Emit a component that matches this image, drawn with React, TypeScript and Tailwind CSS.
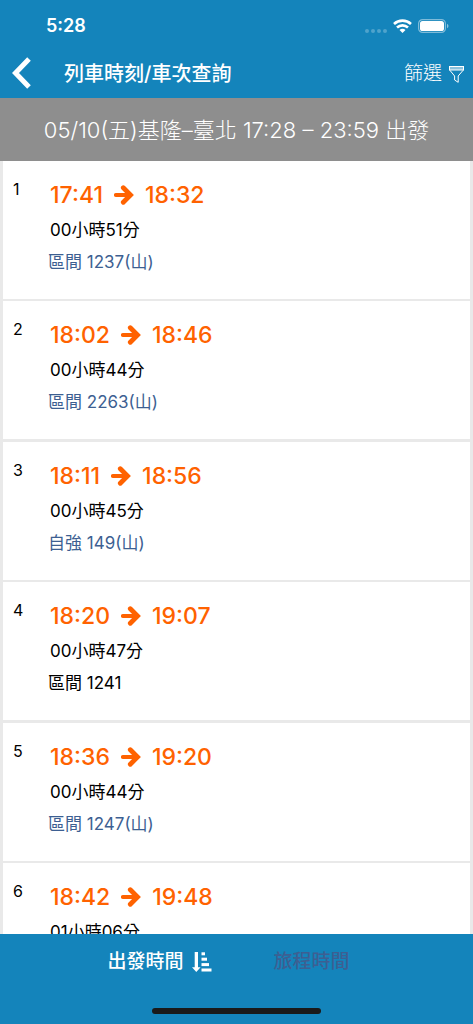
type Train = {
  departure: string;
  arrival: string;
  duration: string;
  name?: string;
  plain?: boolean;
};

const trains: Train[] = [
  { departure: "17:41", arrival: "18:32", duration: "00小時51分", name: "區間 1237(山)" },
  { departure: "18:02", arrival: "18:46", duration: "00小時44分", name: "區間 2263(山)" },
  { departure: "18:11", arrival: "18:56", duration: "00小時45分", name: "自強 149(山)" },
  { departure: "18:20", arrival: "19:07", duration: "00小時47分", name: "區間 1241", plain: true },
  { departure: "18:36", arrival: "19:20", duration: "00小時44分", name: "區間 1247(山)" },
  { departure: "18:42", arrival: "19:48", duration: "01小時06分" },
];

function StatusBar() {
  return (
    <div className="flex h-12 items-center justify-between pt-1 pr-6 pl-[46px]">
      <span className="text-lg font-semibold">5:28</span>
      <div className="flex items-center gap-[6px]">
        <svg width="22" height="14" viewBox="0 0 22 14" fill="#fff" fillOpacity="0.25">
          <circle cx="2" cy="12" r="2" />
          <circle cx="8" cy="12" r="2" />
          <circle cx="14" cy="12" r="2" />
          <circle cx="20" cy="12" r="2" />
        </svg>
        <svg width="19" height="14" viewBox="0 0 19 14" fill="none" stroke="#fff" strokeWidth="2.6">
          <path d="M1 5C5.8.5 13.200.5 18 5" />
          <path d="M4 8.500c3.200-2.900 7.800-2.900 11 0" />
          <path d="M9.500 14 6.500 11c1.700-1.600 4.300-1.600 6 0z" fill="#fff" stroke="none" />
        </svg>
        <svg width="31" height="14" viewBox="0 0 31 14">
          <rect x="0.600" y="0.600" width="26.800" height="12.800" rx="4" fill="none" stroke="#fff" strokeOpacity="0.45" strokeWidth="1.200" />
          <rect x="2" y="2" width="24" height="10" rx="2.600" fill="#fff" />
          <path d="M29 4.800c2 .8 2 3.600 0 4.400z" fill="#fff" fillOpacity="0.5" />
        </svg>
      </div>
    </div>
  );
}

function ArrowIcon() {
  return (
    <svg width="20" height="20" viewBox="0 0 20 20" fill="none" stroke="currentColor">
      <path d="M2 10h13" strokeWidth="4.200" strokeLinecap="round" />
      <path d="M9.300 2.800 16.500 10l-7.200 7.200" strokeWidth="4.800" strokeLinecap="round" strokeLinejoin="miter" />
    </svg>
  );
}

function FilterIcon() {
  return (
    <svg width="15" height="17" viewBox="0 0 15 17" fill="none" stroke="#fff" strokeWidth="1">
      <rect x="0.500" y="0.500" width="14" height="3.500" fill="#fff" fillOpacity="0.5" />
      <path d="M.8 4.200 5.600 10v4l3.600 2.300V10l5-5.800" strokeLinejoin="round" />
    </svg>
  );
}

function SortIcon() {
  return (
    <svg width="20" height="20" viewBox="0 0 20 20" fill="#fff">
      <path d="M2.700 0h3.300v15.300h2.600L4.300 19.900 0 15.300h2.700z" />
      <rect x="9.500" y="0.300" width="3.500" height="3" />
      <rect x="9.500" y="5.700" width="5.500" height="3" />
      <rect x="9.500" y="11.100" width="7.500" height="3" />
      <rect x="9.500" y="16.500" width="10" height="3" />
    </svg>
  );
}

function TrainRow({ train, index }: { train: Train; index: number }) {
  return (
    <li className="flex border-[#e9e9e9] pt-[18px] pb-[21px] odd:border-b-2 even:border-b-3">
      <span className="w-[45px] shrink-0 pl-[10px] text-base leading-5">{index}</span>
      <div className="flex flex-col">
        <div className="flex items-center gap-[11px] pl-[2px] text-[23px] leading-8 font-medium text-[#ff6200]">
          <span>{train.departure}</span>
          <ArrowIcon />
          <span>{train.arrival}</span>
        </div>
        <p className="mt-[3px] pl-[2px] text-[17px] leading-8">{train.duration}</p>
        {train.name && train.plain && <p className="text-[17px] leading-8">{train.name}</p>}
        {train.name && !train.plain && (
          <a href="#train" className="text-[17px] leading-8 text-[#3d5f92]">
            {train.name}
          </a>
        )}
      </div>
    </li>
  );
}

export default function App() {
  return (
    <div className="flex h-screen flex-col bg-white font-['Inter','Noto_Sans_CJK_TC',sans-serif] text-black">
      <header className="bg-[#1484bb] text-white">
        <StatusBar />
        <div className="flex h-[50px] items-center pr-[9px] pl-3">
          <button type="button" aria-label="返回">
            <svg width="19" height="32" viewBox="0 0 19 32" fill="none" stroke="#fff" strokeWidth="5">
              <path d="M17 2 3.500 16 17 30" />
            </svg>
          </button>
          <h1 className="ml-[33px] pt-[2px] text-xl font-medium">列車時刻/車次查詢</h1>
          <button type="button" className="ml-auto flex items-center gap-[7px] pt-[2px] text-[19px] font-light">
            篩選
            <FilterIcon />
          </button>
        </div>
      </header>

      <div className="flex h-[63px] shrink-0 items-center justify-center bg-[#8e8e8e] pt-[2px] text-[22px] font-light text-white">
        05/10(五)基隆–臺北 17:28 – 23:59 出發
      </div>

      <ul className="min-h-0 flex-1 overflow-y-auto border-x-3 border-[#e9e9e9] [scrollbar-width:none]">
        {trains.map((train, i) => (
          <TrainRow key={train.departure} train={train} index={i + 1} />
        ))}
      </ul>

      <footer className="flex shrink-0 flex-col items-center bg-[#1484bb]">
        <div className="flex h-[54px] w-full items-center justify-center gap-[62px] pt-[2px] pr-4 text-[19px] font-medium">
          <button type="button" className="flex items-center gap-2 text-white">
            出發時間
            <SortIcon />
          </button>
          <button type="button" className="text-[#3d5f92]">旅程時間</button>
        </div>
        <div className="mt-5 mb-[10px] h-[6px] w-[169px] rounded-full bg-[#1a1a1a]" />
      </footer>
    </div>
  );
}
